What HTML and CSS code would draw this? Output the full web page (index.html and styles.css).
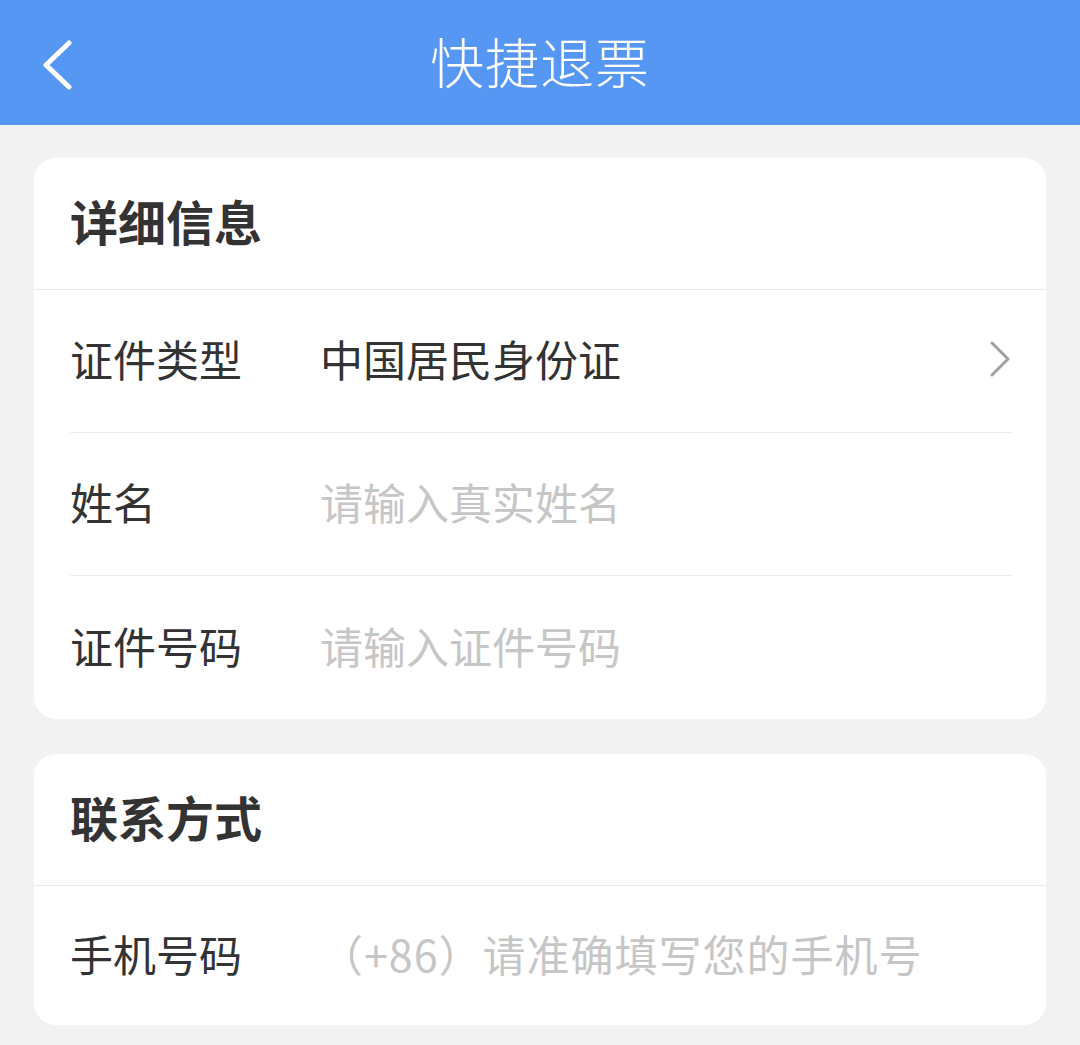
FILE: index.html
```html
<!DOCTYPE html>
<html lang="zh-CN">
<head>
	<meta charset="UTF-8">
	<title>快捷退票</title>
	<link rel="stylesheet" href="styles.css">
</head>
<body>
	<div class="topbar">
		<a class="back" href="#">
			<svg width="34" height="50" viewBox="0 0 34 50"><polyline points="29,3 6,25 29,47" fill="none" stroke="#fff" stroke-width="5" stroke-linecap="round" stroke-linejoin="round"/></svg>
		</a>
		<div class="title">快捷退票</div>
	</div>

	<div class="card">
		<div class="card-head">详细信息</div>
		<div class="row">
			<div class="label">证件类型</div>
			<div class="value">中国居民身份证</div>
			<svg class="arrow" width="24" height="36" viewBox="0 0 24 36"><polyline points="4,2 20,18 4,34" fill="none" stroke="#a0a0a0" stroke-width="3" stroke-linecap="round" stroke-linejoin="round"/></svg>
		</div>
		<div class="row">
			<div class="label">姓名</div>
			<input class="field" type="text" placeholder="请输入真实姓名">
		</div>
		<div class="row">
			<div class="label">证件号码</div>
			<input class="field" type="text" placeholder="请输入证件号码">
		</div>
	</div>

	<div class="card card-short">
		<div class="card-head">联系方式</div>
		<div class="row">
			<div class="label">手机号码</div>
			<input class="field phone" type="tel" placeholder="（+86）请准确填写您的手机号">
		</div>
	</div>
</body>
</html>
```

FILE: styles.css
```css
body{
	margin: 0; background: #f2f2f2; font-family: "Noto Sans CJK SC", "Noto Sans", sans-serif; color: #333;
}
.topbar{
	position: relative; height: 125px; background: #5697f3; display: flex; align-items: center; justify-content: center;
}
.back{
	position: absolute; left: 40px; top: 40px; display: block; width: 34px; height: 50px;
}
.title{
	color: #fff; font-size: 54px; font-weight: 300; letter-spacing: 1px; padding-bottom: 4px;
}
.card{
	margin: 33px 34px 0; background: #fff; border-radius: 22px; overflow: hidden;
}
.card + .card{
	margin-top: 35px;
}
.card-head{
	height: 131px; border-bottom: 1px solid #e9e9e9; padding: 0 0 8px 36px; display: flex; align-items: center; box-sizing: border-box;
	font-size: 48px; font-weight: bold; color: #333;
}
.card-head{
	height: 132px;
}
.row{
	height: 143px; margin: 0 34px 0 36px; padding-bottom: 6px; display: flex; align-items: center; border-bottom: 1px solid #ececec; box-sizing: border-box;
}
.row:last-child{
	border-bottom: none;
}
.card-short .row{
	height: 139px;
}
.label{
	width: 250px; flex: none; font-size: 43px; color: #333;
}
.value{
	flex: 1; font-size: 43px; color: #333;
}
.arrow{
	flex: none; margin-top: 2px;
}
.field{
	flex: 1; min-width: 0; border: none; outline: none; padding: 0; background: transparent;
	font-family: inherit; font-size: 43px; color: #333;
}
.field::placeholder{
	color: #c6c6c6;
}
.phone{
	letter-spacing: 1px;
}
```
